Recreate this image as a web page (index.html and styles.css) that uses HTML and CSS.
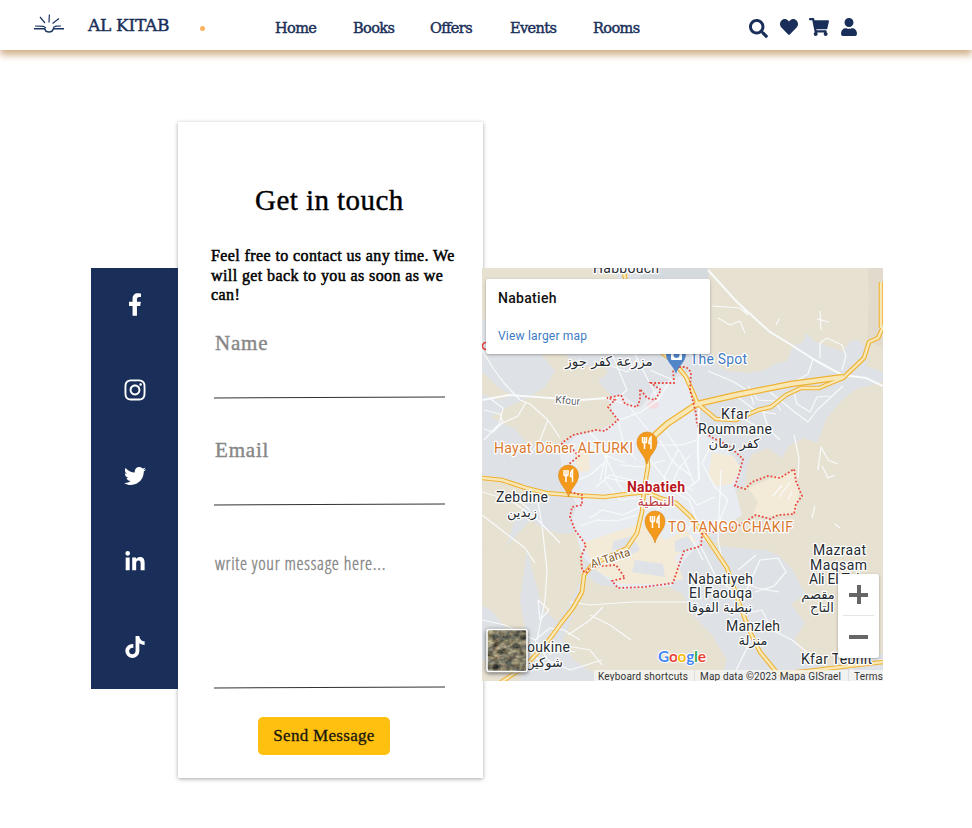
FILE: index.html
```html
<!DOCTYPE html>
<html lang="en">
<head>
<meta charset="utf-8">
<title>Al Kitab - Contact</title>
<link rel="stylesheet" href="styles.css">
</head>
<body>
<header class="topbar">
  <svg class="logo" width="32" height="20" viewBox="0 0 32 20" fill="none" stroke="#1b3563">
    <path d="M16 8.500 16.400 0.500M12 9 7 3M19.500 9.500 26 4.500" stroke-width="1.200"/>
    <path d="M2 12 10.500 12.300 13 14M20 13.500 23 12.200 28 12" stroke-width="1.200"/>
    <path d="M1 14.800H11.500L13 17.200Q16 18.600 19 17.200L20.500 14.800H31" stroke-width="1.500"/>
  </svg>
  <span class="brand">AL KITAB</span>
  <span class="dot"></span>
  <nav class="nav">
    <a class="home">Home</a><a class="books">Books</a><a class="offers">Offers</a><a class="events">Events</a><a class="rooms">Rooms</a>
  </nav>
  <div class="tools">
    <svg width="19" height="19" viewBox="0 0 512 512"><path d="M505 442.700 405.300 343c-4.500-4.500-10.600-7-17-7H372c27.600-35.300 44-79.700 44-128C416 93.100 322.900 0 208 0S0 93.100 0 208s93.100 208 208 208c48.300 0 92.700-16.400 128-44v16.300c0 6.400 2.500 12.500 7 17l99.700 99.700c9.400 9.400 24.600 9.400 33.900 0l28.300-28.300c9.400-9.400 9.400-24.600.1-34zM208 336c-70.700 0-128-57.200-128-128 0-70.700 57.200-128 128-128 70.700 0 128 57.200 128 128 0 70.700-57.200 128-128 128z"/></svg>
    <svg class="heart" width="18" height="18" viewBox="0 0 512 512"><path d="M462.300 62.600C407.500 15.900 326 24.300 275.700 76.200L256 96.500l-19.700-20.300C186.100 24.300 104.500 15.900 49.700 62.600c-62.800 53.600-66.100 149.800-9.900 207.900l193.500 199.800c12.500 12.900 32.800 12.900 45.300 0l193.500-199.800c56.300-58.100 53-154.300-9.800-207.900z"/></svg>
    <svg class="cart" width="20" height="18" viewBox="0 0 576 512"><path d="M528.120 301.319l47.273-208C578.806 78.301 567.391 64 551.990 64H159.208l-9.166-44.810C147.758 8.021 137.930 0 126.529 0H24C10.745 0 0 10.745 0 24v16c0 13.255 10.745 24 24 24h69.883l70.248 343.435C147.325 417.100 136 435.222 136 456c0 30.928 25.072 56 56 56s56-25.072 56-56c0-15.674-6.447-29.835-16.824-40h209.647C430.447 426.165 424 440.326 424 456c0 30.928 25.072 56 56 56s56-25.072 56-56c0-22.172-12.888-41.332-31.579-50.405l5.517-24.276c3.413-15.018-8.002-29.319-23.403-29.319H218.117l-6.545-32h293.145c11.206 0 20.920-7.754 23.403-18.681z"/></svg>
    <svg class="user" width="16" height="18" viewBox="0 0 448 512"><path d="M224 256c70.700 0 128-57.300 128-128S294.700 0 224 0 96 57.300 96 128s57.300 128 128 128zm89.600 32h-16.700c-22.200 10.200-46.900 16-72.900 16s-50.600-5.800-72.900-16h-16.700C60.200 288 0 348.200 0 422.400V464c0 26.500 21.500 48 48 48h352c26.500 0 48-21.500 48-48v-41.600c0-74.200-60.200-134.400-134.400-134.400z"/></svg>
  </div>
</header>

<main class="contact">
  <aside class="social">
    <svg width="14" height="23" viewBox="0 0 320 512"><path d="M279.140 288l14.220-92.660h-88.910v-60.130c0-25.350 12.420-50.060 52.240-50.060h40.420V6.260S260.430 0 225.360 0c-73.220 0-121.080 44.380-121.080 124.720v70.620H22.890V288h81.390v224h100.170V288z"/></svg>
    <svg width="22" height="24" viewBox="0 0 448 512"><path d="M224.100 141c-63.600 0-114.900 51.300-114.900 114.900s51.300 114.900 114.900 114.900S339 319.500 339 255.900 287.700 141 224.100 141zm0 189.600c-41.100 0-74.700-33.500-74.700-74.700s33.500-74.700 74.700-74.700 74.700 33.500 74.700 74.700-33.600 74.700-74.700 74.700zm146.400-194.300c0 14.900-12 26.800-26.800 26.800-14.900 0-26.800-12-26.800-26.800s12-26.800 26.800-26.800 26.800 12 26.800 26.800zm76.100 27.200c-1.700-35.900-9.900-67.700-36.200-93.900-26.200-26.200-58-34.400-93.900-36.200-37-2.100-147.900-2.100-184.900 0-35.800 1.700-67.600 9.900-93.900 36.100s-34.400 58-36.200 93.900c-2.100 37-2.100 147.900 0 184.900 1.700 35.900 9.900 67.700 36.200 93.900s58 34.400 93.900 36.200c37 2.100 147.900 2.100 184.900 0 35.900-1.700 67.700-9.900 93.900-36.200 26.200-26.200 34.400-58 36.200-93.900 2.100-37 2.100-147.800 0-184.800zM398.800 388c-7.800 19.600-22.900 34.700-42.600 42.600-29.500 11.700-99.500 9-132.100 9s-102.700 2.600-132.100-9c-19.600-7.800-34.700-22.900-42.600-42.600-11.700-29.500-9-99.500-9-132.100s-2.600-102.700 9-132.100c7.800-19.600 22.900-34.700 42.600-42.600 29.500-11.700 99.500-9 132.100-9s102.700-2.600 132.100 9c19.600 7.800 34.700 22.900 42.600 42.600 11.700 29.500 9 99.500 9 132.100s2.700 102.700-9 132.100z"/></svg>
    <svg width="22" height="22" viewBox="0 0 512 512"><path d="M459.370 151.716c.325 4.548.325 9.097.325 13.645 0 138.720-105.583 298.558-298.558 298.558-59.452 0-114.680-17.219-161.137-47.106 8.447.974 16.568 1.299 25.340 1.299 49.055 0 94.213-16.568 130.274-44.832-46.132-.975-84.792-31.188-98.112-72.772 6.498.974 12.995 1.624 19.818 1.624 9.421 0 18.843-1.300 27.614-3.573-48.081-9.747-84.143-51.980-84.143-102.985v-1.299c13.969 7.797 30.214 12.670 47.431 13.319-28.264-18.843-46.781-51.005-46.781-87.391 0-19.492 5.197-37.360 14.294-52.954 51.655 63.675 129.300 105.258 216.365 109.807-1.624-7.797-2.599-15.918-2.599-24.040 0-57.828 46.782-104.934 104.934-104.934 30.213 0 57.502 12.670 76.670 33.137 23.715-4.548 46.456-13.320 66.599-25.340-7.798 24.366-24.366 44.833-46.132 57.827 21.117-2.273 41.584-8.122 60.426-16.243-14.292 20.791-32.161 39.308-52.628 54.253z"/></svg>
    <svg width="20" height="22" viewBox="0 0 448 512"><path d="M100.280 448H7.400V148.900h92.880zM53.790 108.100C24.090 108.100 0 83.500 0 53.800a53.790 53.790 0 0 1 107.580 0c0 29.700-24.100 54.300-53.790 54.300zM447.900 448h-92.680V302.400c0-34.700-.7-79.200-48.290-79.200-48.290 0-55.690 37.700-55.690 76.700V448h-92.780V148.900h89.080v40.800h1.300c12.400-23.500 42.690-48.300 87.880-48.300 94 0 111.280 61.900 111.280 142.300V448z"/></svg>
    <svg width="20" height="22" viewBox="0 0 448 512"><path d="M448 209.910a210.060 210.060 0 0 1-122.770-39.250v178.720A162.550 162.550 0 1 1 185 188.310v89.890a74.620 74.620 0 1 0 52.230 71.180V0h88a121.180 121.180 0 0 0 1.860 22.170A122.180 122.180 0 0 0 381 102.390a121.430 121.430 0 0 0 67 20.140z"/></svg>
  </aside>

  <form class="card">
    <h1>Get in touch</h1>
    <p>Feel free to contact us any time. We<br>will get back to you as soon as we<br>can!</p>
    <label class="field"><input type="text" placeholder="Name"><span class="rule"></span></label>
    <label class="field email"><input type="text" placeholder="Email"><span class="rule"></span></label>
    <label class="field message"><textarea placeholder="write your message here..."></textarea><span class="rule"></span></label>
    <button type="button">Send Message</button>
  </form>

  <section class="map">
    <svg class="canvas" viewBox="482 268 401 413" width="401" height="413">
      <defs>
        <g id="food"><path d="M0 22C-2 13-10 9-10 0a10 10 0 0 1 20 0C10 9 2 13 0 22Z" fill="#f39a1d" stroke="#d98316" stroke-width=".6"/><path d="M-4.500-5v4q0 2 2 2t2-2v-4M-2.500-5V7M4 7V-5Q1.800-3 2 1.500H4" fill="none" stroke="#fff" stroke-width="1.500"/></g>
        <filter id="terrain" x="0" y="0" width="100%" height="100%" color-interpolation-filters="sRGB"><feTurbulence type="fractalNoise" baseFrequency=".15 .2" numOctaves="4" seed="8"/><feColorMatrix values=".8 .3 0 0 -.07  .7 .4 0 0 -.09  .5 .4 .1 0 -.12  0 0 0 0 1"/></filter>
      </defs>
      <rect x="482" y="268" width="401" height="413" fill="#dee2e6"/>
      <g fill="#e7e1d2">
        <path d="M482 268H607L619 279V290H486V322L482 318Z"/>
        <path d="M541 354H566L574 366H603L608 373 598 381 612 397 610 410 617 421 603 430 575 434 563 443 568 455 556 451 543 440 529 446 514 428 503 424 491 417 508 407 530 397 545 387 555 371Z"/>
        <path d="M482 372 500 389 514 395 498 400 482 394Z"/>
        <path d="M482 480 500 480 525 488 529 500 513 524 508 543 500 555 482 550Z"/>
        <path d="M482 548 508 545 530 520 543 528 560 534 580 532 584 546 583 574 572 600 558 622 543 610 535 580 527 550 520 600 525 628 508 632 493 612 482 605Z"/>
        <path d="M583 575 600 585 627 588 665 585 683 594 690 612 712 635 727 660 720 681H607L573 660 563 640 572 617Z"/>
        <path d="M482 660H530L519 681H482Z"/>
        <path d="M708 268H883V372L866 366 868 350 858 340 850 341 843 352 816 342 806 333 803 342 793 346 787 361 775 364 765 370 747 373 727 371 711 361 708 315Z"/>
        <path d="M883 382 856 389 842 400 826 419 821 434 817 443 804 438 789 446 782 458 768 448 752 454 747 466 745 486 730 493 731 520 713 546 738 548 765 550 778 555 793 570 798 581 806 594 791 604 805 623 795 638 803 659 825 667 883 654Z"/>
      </g>
      <path d="M648 268 708 268 709 278H640Z" fill="#d5dade"/>
      <path d="M868 268H883V348L867 340 869 300Z" fill="#ded7c8" opacity=".55"/>
      <g fill="#e8ecf0">
        <path d="M607 398 624 395 640 408 658 385 690 372 695 420 705 435 735 458 741 475 735 488 742 515 718 530 700 543 683 562 672 586 620 590 612 583 596 570 582 555 572 520 577 505 564 485 560 455 575 436 600 430 617 421Z"/>
      </g>
      <g fill="#f3ebd8">
        <path d="M712 453 733 456 741 468 732 484 717 486 708 477Z"/>
        <path d="M748 488 776 476 795 471 799 490 796 513 765 517 753 514 758 502Z"/>
        <path d="M583 543 615 532 641 524 665 540 686 530 696 541 675 557 683 579 660 584 620 584 594 569Z"/>
        <path d="M574 452 588 448 590 471 578 472Z"/>
      </g>
      <path d="M614 541 632 536 640 550 625 558 610 555ZM635 560 663 564 665 577 632 572ZM675 541 687 536 694 545 684 553 675 551Z" fill="#dfe3e8"/>
      <ellipse cx="653" cy="405" rx="6" ry="4" fill="#f5dce0"/>
      <g fill="none" stroke="#f8fafb" stroke-width="1.200" stroke-linejoin="round">
        <path stroke-width="2" d="M482 400 509 395 550 398 581 400 607 398M708 270 737 302 770 332 790 344 813 359 842 375 866 378 883 386M699 404 698 450 699 480"/>
        <path d="M482 350 493 368 504 383 520 400 530 404 548 420 560 438M526 402 518 416 498 425 484 440M548 420 540 440 530 455M484 410 500 414 503 422 493 432 484 429M489 398 503 408 499 425M482 492 510 500 538 520 560 543M537 497 542 525 547 570 545 600 537 640M482 515 499 528 525 548 535 563M512 495 530 510M482 620 505 625 535 640 548 660 570 670 602 660M562 645 590 650 602 665M530 650 548 672M570 602 590 605 633 602 690 602M603 607 590 620 568 635M590 615 610 625 631 640M538 600 540 620 549 610Z"/>
        <path d="M607 398 628 405 648 430M604 363 627 372 638 358M612 354 627 390 615 400M635 354 648 380 659 400M650 370 673 380M668 384 658 400 641 412 617 421M618 421 624 445 636 460M580 440 605 455 625 463M589 432 608 450 605 478M565 485 590 475 605 462M599 445 617 480M610 440 600 480M596 487 610 475 632 480M620 465 642 467 665 460M607 478 642 485M660 440 673 462 690 475M653 445 682 445 697 440M678 450 665 475 662 494M690 455 678 470 669 492M711 445 702 463 715 487 728 500 718 525M699 480 685 490 697 505 715 497M670 490 689 500 696 518 688 530M660 500 656 517 665 525M590 518 602 510 623 515 640 507M580 526 597 520 617 521 637 515M604 480 620 500 637 498M616 480 627 496M632 480 637 490M650 460 667 481 693 490M665 430 682 455 694 483"/>
        <path d="M712 306 740 308 748 315M718 318 730 325 740 321 745 333M744 310 752 315M776 325 779 319M821 330 820 311M817 319 829 322M820 358 820 343 827 338 842 345 846 356 842 370M813 359 808 374 793 383M748 386 758 400 775 401 781 411M793 389 797 404 810 412 817 397 830 396M770 392 780 400 792 410 808 422 817 410 843 386M708 371 734 382 750 392 754 405M735 395 756 411 776 414M720 420 740 417 762 429M762 408 769 430 780 440M742 600 760 560 778 558 786 572 774 586 755 592M738 570 756 555M738 581 757 588 779 592M739 615 762 610 772 630 792 640 808 653 818 660M755 627 746 650 734 675M818 470 821 447 828 460 838 464M794 435 799 458 798 478M822 466 828 478 835 475M812 518 815 506M835 524 840 528M773 496 782 485M779 497 790 482M788 500 792 492"/>
        <path d="M535 640 550 628 564 630 580 640M540 645 575 652M552 632 550 655M830 677 850 658 883 660M845 660 860 681M700 545 715 575 731 590M690 535 703 560M721 470 718 540 722 560"/>
      </g>
      <g fill="none" stroke-linejoin="round">
        <g stroke="#efb233" stroke-width="4.600">
          <path d="M623 268 626 282M660 351 674 362 686 377 698 404 716 419 736 420 758 410 771 407 786 395 801 388 819 388 843 378 864 358 869 342 878 338 884 325M881 282V328"/>
          <path d="M647 450 655 435 667 424 697 404 736 395 791 384 843 377" stroke-width="6.500"/>
          <path d="M646 445 648 466 644 490 642 512 637 533 627 548 608 557 592 565 584 575 582 592 573 608 562 622 546 644 525 666 500 683"/>
          <path d="M482 478 502 480 526 488 546 493 571 495 604 497 627 494 647 492 660 498 676 503 690 516 707 538 727 568 738 600 749 630 760 652 778 674 808 671 883 662"/>
        </g>
        <g stroke="#f8e8b7" stroke-width="2.400">
          <path d="M623 268 626 282M660 351 674 362 686 377 698 404 716 419 736 420 758 410 771 407 786 395 801 388 819 388 843 378 864 358 869 342 878 338 884 325M881 282V328"/>
          <path d="M647 450 655 435 667 424 697 404 736 395 791 384 843 377" stroke-width="4"/>
          <path d="M646 445 648 466 644 490 642 512 637 533 627 548 608 557 592 565 584 575 582 592 573 608 562 622 546 644 525 666 500 683"/>
          <path d="M482 478 502 480 526 488 546 493 571 495 604 497 627 494 647 492 660 498 676 503 690 516 707 538 727 568 738 600 749 630 760 652 778 674 808 671 883 662"/>
        </g>
      </g>
      <g fill="none" stroke="#e8483e" stroke-width="1.800" stroke-dasharray="1.800 2">
        <path d="M679 367 686 367 691 372 690 390 696 413 697 425 711 437 729 446 743 459 739 474 735 486 745 489 752 482 768 476 780 478 794 469 796 481 802 496 796 504 794 514 778 515 770 519 756 515 740 525 725 530 702 534 701 546 684 551 678 568 673 583 645 587 618 588 612 581 620 579 625 578 616 565 590 567 586 573 582 570 581 557 586 545 575 530 570 517 572 507 582 505 582 495 570 492 569 464 579 456 573 450 562 451 562 443 573 435 596 430 605 431 618 420 608 407 615 400 607 398 621 395 625 404 637 407 640 400 640 389 647 398 655 400 661 390 651 383 660 383 674 383 673 370 679 367"/>
      </g>
      <circle cx="486" cy="346" r="3.500" fill="none" stroke="#e53935" stroke-width="1.500"/>
      <g class="labels">
        <text x="593" y="273" textLength="66">Habbouch</text>
        <text class="ar" x="609" y="366" style="font-size:13.500px">مزرعة كفر جوز</text>
        <text class="small" x="555" y="403" transform="rotate(5 555 403)" textLength="25">Kfour</text>
        <text class="small brown" x="592" y="568" transform="rotate(-18 592 568)" textLength="41">Al Tahta</text>
        <text x="721" y="419" textLength="28">Kfar</text><text x="698" y="434" textLength="74">Roummane</text><text class="ar" x="734" y="448">كفر رمان</text>
        <text x="496" y="502" textLength="52">Zebdine</text><text class="ar" x="522" y="517">زبدين</text>
        <text x="688" y="584" textLength="65">Nabatiyeh</text><text x="689" y="598" textLength="63">El Faouqa</text><text class="ar" x="720" y="612">نبطية الفوقا</text>
        <text x="726" y="631" textLength="54">Manzleh</text><text class="ar" x="753" y="645">منزلة</text>
        <text x="813" y="555" textLength="53">Mazraat</text><text x="810" y="569.500" textLength="57">Maqsam</text><text x="809" y="584" textLength="55">Ali El Tah</text><text class="ar" x="818" y="599">مقصم</text><text class="ar" x="822" y="612">التاح</text>
        <text x="801" y="664" textLength="71">Kfar Tebnit</text>
        <text x="527" y="652" textLength="43">oukine</text><text class="ar" x="544" y="667">شوكين</text>
        <text class="orange" x="494" y="453" textLength="139">Hayat Döner ALTURKI</text>
        <text class="orange" x="668" y="532" textLength="125">TO TANGO CHAKIF</text>
        <text class="blue" x="690" y="364" textLength="57">The Spot</text>
        <text class="red" x="627" y="491.500" textLength="58">Nabatieh</text><text class="ar redar" x="656" y="506">النبطية</text>
      </g>
      <path d="M676 374C674 366 666 362 666 354a10 10 0 0 1 20 0C686 362 678 366 676 374Z" fill="#5385c9"/><rect x="671" y="350" width="11" height="10" rx="1" fill="#fff"/><circle cx="676.500" cy="355" r="3" fill="#5385c9"/>
      <use href="#food" x="647" y="442"/><use href="#food" x="568.500" y="475"/><use href="#food" x="655" y="521"/>
      <text class="google" x="658" y="662" textLength="48"><tspan fill="#4285f4">G</tspan><tspan fill="#ea4335">o</tspan><tspan fill="#fbbc05">o</tspan><tspan fill="#4285f4">g</tspan><tspan fill="#34a853">l</tspan><tspan fill="#ea4335">e</tspan></text>
      <path d="M594 670H883V681H594Z" fill="#f5f5f3" opacity=".78"/>
      <path d="M694.500 670V681M848.500 670V681" stroke="#ddd"/>
      <g class="legal"><text x="598" y="680" textLength="90">Keyboard shortcuts</text><text x="700" y="680" textLength="141">Map data ©2023 Mapa GISrael</text><text x="854" y="680" textLength="29">Terms</text></g>
      <g class="thumb"><rect x="487" y="630" width="40" height="41" filter="url(#terrain)"/><rect x="487" y="629.500" width="40" height="42" rx="2" fill="none" stroke="#fff" stroke-width="1.600"/></g>
    </svg>
    <div class="place"><strong>Nabatieh</strong><a>View larger map</a></div>
    <div class="zoom"><span class="plus"></span><span class="minus"></span></div>
  </section>
</main>
</body>
</html>
```
FILE: styles.css
```css
* { box-sizing: border-box; }
body { margin: 0; min-height: 828px; background: #fff; font-family: "Liberation Serif", serif; overflow: hidden; }

.topbar { display: flex; height: 50px; padding-left: 33px; background: #fff; color: #192f59; box-shadow: 0 5px 7px #d2b08a; }
.topbar svg { fill: #192f59; flex: none; }
.topbar .logo { margin-top: 14px; fill: none; }
.brand, .nav { font-family: "DejaVu Serif", serif; -webkit-text-stroke: 0.45px; }
.brand { width: 86px; margin: 14px 0 0 23px; font-size: 17px; line-height: 22px; letter-spacing: -0.3px; white-space: nowrap; }
.dot { flex: none; width: 5px; height: 5px; margin: 26px 0 0 26px; border-radius: 50%; background: #fdb45f; }
.nav { display: flex; flex: none; width: 473px; margin: 18px 0 0 70px; font-size: 14.500px; line-height: 20px; letter-spacing: -0.6px; }
.nav a { white-space: nowrap; }
.home { width: 78px; }
.books { width: 77px; }
.offers { width: 80px; }
.events { width: 83px; }
.tools { display: flex; align-items: flex-start; padding-top: 18px; }
.tools svg:first-child { margin: 1px 0 0 1px; }
.tools .heart { margin-left: 12px; }
.tools .cart { margin-left: 11px; }
.tools .user { margin-left: 12px; }

.contact { display: grid; grid-template-columns: 87px 305px 401px; padding: 72px 0 0 91px; align-items: start; }
.social { position: relative; z-index: 1; display: flex; flex-direction: column; align-items: center; gap: 63.500px; height: 421px; margin-top: 146px; padding-top: 25px; background: #192f59; }
.social svg { fill: #fff; flex: none; }
.social svg:first-child { margin-bottom: -2px; }

.card { display: flex; flex-direction: column; height: 656px; padding: 60px 0 0 33px; background: #fff; box-shadow: 0 1px 4px rgba(0, 0, 0, 0.35); }
h1 { margin: 0 0 0 44px; font-size: 29px; font-weight: 400; line-height: 36px; letter-spacing: 0.45px; -webkit-text-stroke: 0.4px; white-space: nowrap; }
.card p { margin: 28px 0 0; font-size: 16px; line-height: 19.500px; letter-spacing: 0.4px; white-space: nowrap; -webkit-text-stroke: 0.5px; }
.field { display: block; width: 232px; height: 107px; margin: 15px 0 0 3px; }
.field input { display: block; width: 100%; height: 58px; padding: 0 1px 10px; border: 0; outline: 0; background: none; font: 21px "Liberation Serif", serif; letter-spacing: 0.8px; }
.field ::placeholder { color: #878787; opacity: 1; }
.field input::placeholder { -webkit-text-stroke: 0.4px; }
.rule { display: block; width: 231px; height: 1px; margin-top: 19px; background: #333; transform: rotate(-0.28deg); }
.field.email { margin-top: 0; height: 107px; }
.field.message { height: 156px; margin-top: 4px; }
.field textarea { display: block; width: 100%; height: 130px; padding: 15px 1px; border: 0; outline: 0; resize: none; background: none; font: 300 18px/20px "Open Sans Condensed Light", "Roboto Condensed", "Liberation Sans Narrow", Roboto, sans-serif; letter-spacing: 0.7px; }
.field textarea::placeholder { -webkit-text-stroke: 0.4px; }
.card button { flex: none; width: 132px; height: 38px; margin: 23px 0 0 47px; padding: 0; border: 0; border-radius: 5px; background: #ffc010; color: #17160f; font: 17px "Liberation Serif", serif; letter-spacing: 0.3px; -webkit-text-stroke: 0.3px; white-space: nowrap; }

.map { position: relative; z-index: 1; width: 401px; height: 413px; margin: 146px 0 0 -1px; overflow: hidden; font-family: Roboto, sans-serif; }
.canvas { display: block; }
.labels text { font: 14px Roboto, sans-serif; fill: #262b31; stroke: #fff; stroke-width: 2.500px; stroke-linejoin: round; paint-order: stroke; }
.labels .ar { font: 13px "DejaVu Sans", sans-serif; text-anchor: middle; }
.labels .small { font-size: 10.500px; fill: #5b6067; }
.labels .brown { fill: #795321; font-size: 11.500px; }
.labels .orange { fill: #d9782d; }
.labels .blue { fill: #3f78c4; }
.labels .red { fill: #b9161d; font-weight: 700; }
.labels .redar { fill: #b84148; }
.google { font: 700 15.500px Lato, sans-serif; stroke: #fff; stroke-width: 2px; paint-order: stroke; }
.legal { font-size: 10px; fill: #343434; }
.thumb { filter: drop-shadow(0 1px 2px #555); }
.place { position: absolute; left: 4px; top: 11px; display: flex; flex-direction: column; width: 224px; height: 75px; padding: 10px 12px; background: #fff; border-radius: 2px; box-shadow: 0 1px 3px rgba(0, 0, 0, 0.3); }
.place strong { font-size: 14px; line-height: 18px; font-weight: 500; letter-spacing: 0.3px; color: #111; }
.place a { margin-top: 21px; font-size: 12px; line-height: 16px; letter-spacing: 0.2px; color: #3d7bc3; }
.zoom { position: absolute; right: 4px; top: 306px; display: grid; grid-template-rows: 42px 42px; width: 41px; height: 84px; padding: 0 5px; border-radius: 2px; background: #fff; box-shadow: 0 1px 3px rgba(0, 0, 0, 0.3); }
.plus, .minus { background: linear-gradient(#666, #666) center / 19px 4px no-repeat; }
.plus { border-bottom: 1px solid #e5e5e5; background: linear-gradient(#666, #666) center / 19px 4px no-repeat, linear-gradient(#666, #666) center / 4px 19px no-repeat; }
```
